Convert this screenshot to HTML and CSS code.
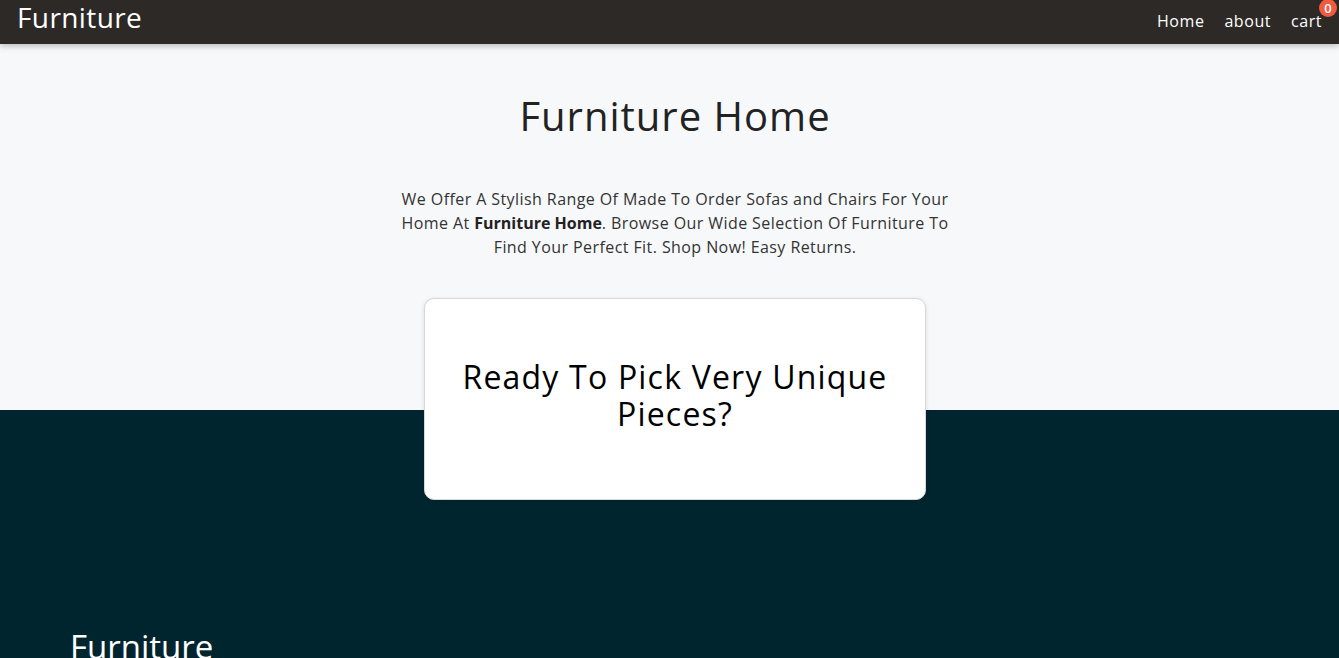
FILE: index.html
```html
<!DOCTYPE html>
<html lang="en">
<head>
<meta charset="utf-8">
<title>Furniture</title>
<link rel="stylesheet" href="styles.css">
</head>
<body>
<header class="navbar">
  <a class="logo" href="#">Furniture</a>
  <nav class="links">
    <a href="#">Home</a>
    <a href="#">about</a>
    <a class="cart" href="#">cart<span class="badge">0</span></a>
  </nav>
</header>
<section class="hero">
  <h1 class="hero-title">Furniture Home</h1>
  <p class="hero-text">We Offer A Stylish Range Of Made To Order Sofas and Chairs For Your Home At <strong class="brand">Furniture Home</strong>. Browse Our Wide Selection Of Furniture To Find Your Perfect Fit. Shop Now! Easy Returns.</p>
  <div class="card">
    <h2 class="card-title">Ready To Pick Very Unique Pieces?</h2>
  </div>
</section>
<footer class="footer">
  <h2 class="footer-logo">Furniture</h2>
</footer>
</body>
</html>
```
FILE: styles.css
```css
* { box-sizing: border-box; }
html, body { margin: 0; padding: 0; }
body {
  font-family: "Open Sans", "Liberation Sans", sans-serif;
  background: #01252f;
  overflow: hidden;
}
a { text-decoration: none; color: inherit; }

.navbar {
  height: 44px;
  background: #2d2927;
  color: #fff;
  display: flex;
  justify-content: space-between;
  align-items: flex-start;
  padding: 0 17px;
  box-shadow: 0 2px 6px rgba(0,0,0,0.25);
  position: relative;
  z-index: 2;
}
.logo {
  font-size: 28px;
  font-weight: 500;
  line-height: 34px;
  letter-spacing: 0.4px;
}
.links {
  display: flex;
  gap: 20px;
  padding-top: 9px;
  font-size: 16px;
  line-height: 24px;
  letter-spacing: 0.55px;
}
.cart { position: relative; }
.badge {
  position: absolute;
  top: -10px;
  right: -15px;
  width: 18px;
  height: 18px;
  border-radius: 50%;
  background: #f25a3f;
  color: #fff;
  font-size: 13px;
  font-weight: 600;
  letter-spacing: 0;
  line-height: 18px;
  text-align: center;
}

.hero {
  background: #f7f8fa;
  height: 366px;
  padding-top: 48px;
  padding-left: 11px;
  display: flex;
  flex-direction: column;
  align-items: center;
}
.hero-title {
  margin: 0;
  font-size: 40px;
  font-weight: 400;
  line-height: 48px;
  letter-spacing: 1px;
  color: #222;
}
.hero-text {
  margin: 47px 0 0;
  width: 562px;
  text-align: center;
  font-size: 16px;
  line-height: 24px;
  letter-spacing: 0.42px;
  color: #333;
}
.brand {
  letter-spacing: 0;
  color: #222;
}
.card {
  margin-top: 39px;
  width: 502px;
  height: 202px;
  flex-shrink: 0;
  background: #fff;
  border: 1px solid #d8d8d8;
  border-radius: 10px;
  box-shadow: 0 1px 4px rgba(0,0,0,0.12);
  display: flex;
  align-items: center;
  justify-content: center;
  padding: 0 20px 8px;
  position: relative;
  z-index: 1;
}
.card-title {
  margin: 0;
  text-align: center;
  font-size: 32px;
  font-weight: 400;
  line-height: 37px;
  letter-spacing: 1.2px;
  color: #000;
}

.footer {
  padding: 217px 70px 0;
  color: #fff;
}
.footer-logo {
  margin: 0;
  font-size: 33px;
  font-weight: 500;
  line-height: 40px;
}
```
